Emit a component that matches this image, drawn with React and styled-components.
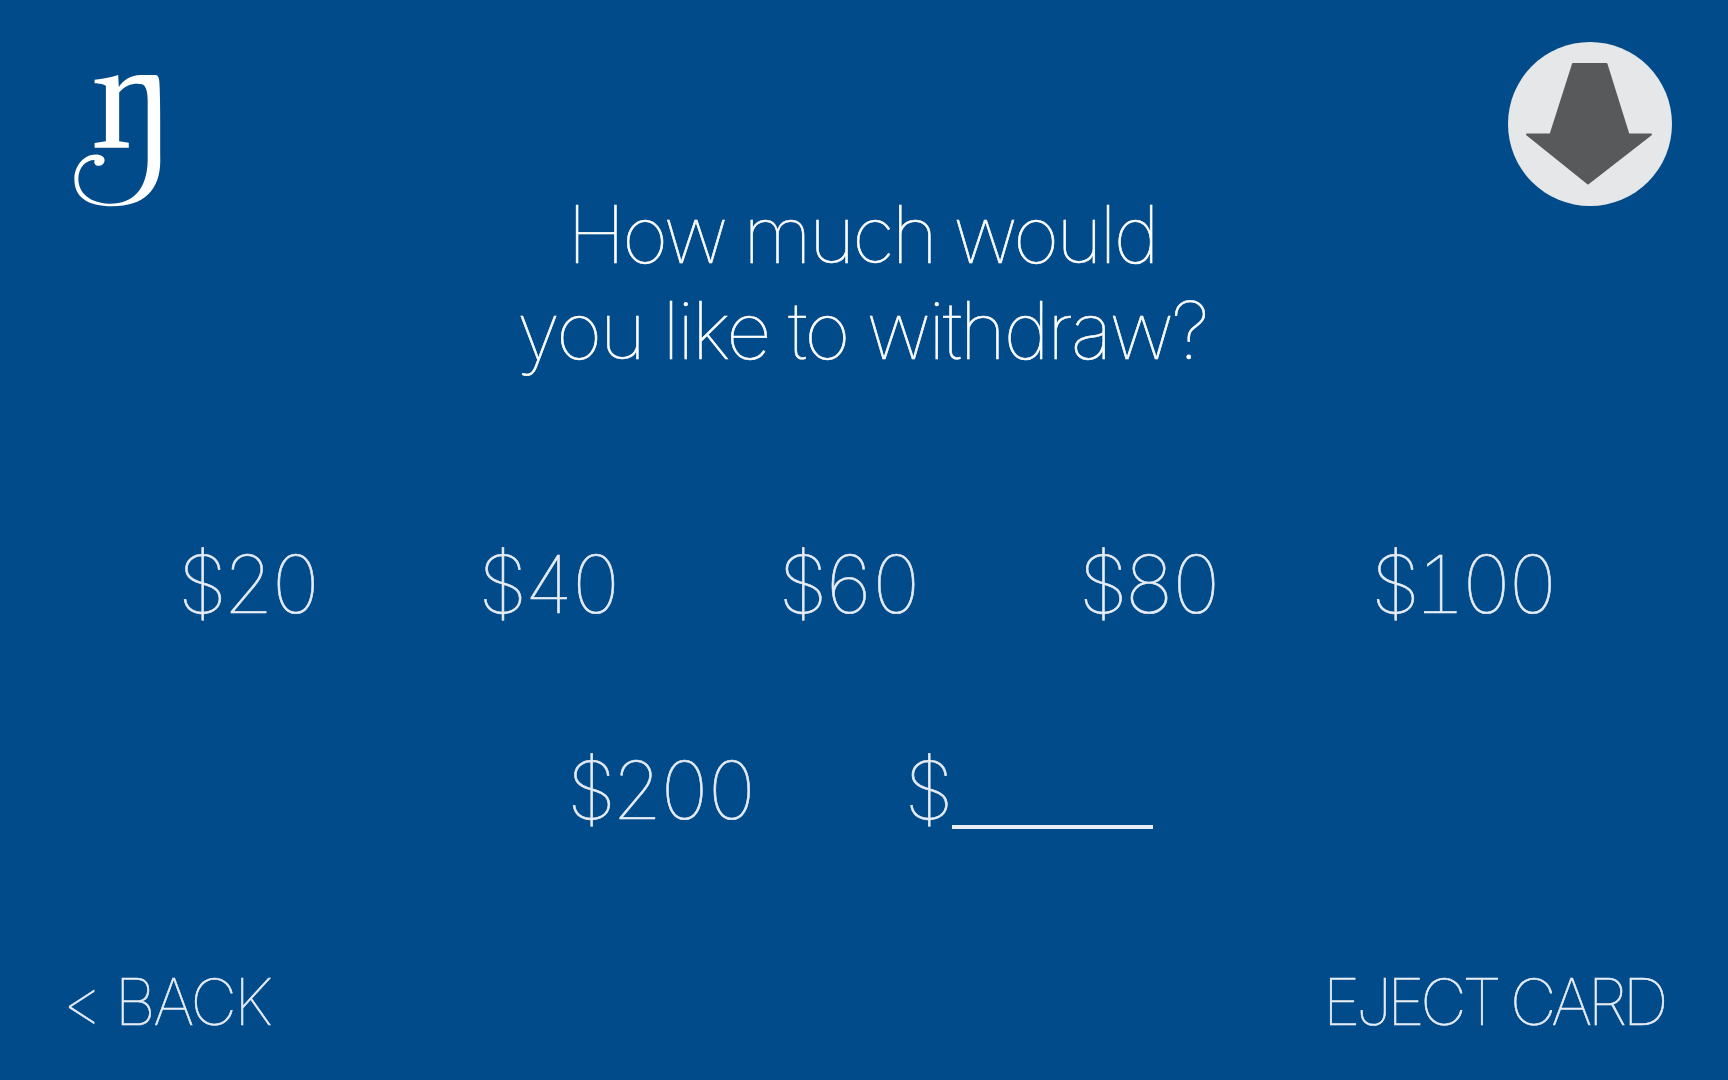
import React from 'react'
import styled, { createGlobalStyle } from 'styled-components'

const GlobalStyle = createGlobalStyle`
  html, body {
    margin: 0;
    padding: 0;
    background: #014b8b;
  }
`

const Screen = styled.div`
  box-sizing: border-box;
  width: 1728px;
  height: 1080px;
  overflow: hidden;
  padding: 42px 56px 0;
  background: #014b8b;
  color: #fff;
  font-family: Inter, "Liberation Sans", sans-serif;
  font-weight: 100;
  font-variant-numeric: tabular-nums;
  -webkit-text-stroke: 0.6px currentColor;
`

const TopRow = styled.header`
  display: grid;
  grid-template-columns: 1fr auto 1fr;
  align-items: start;
`

const Logo = styled.svg`
  display: block;
  width: 87px;
  height: 132px;
  margin: 33px 0 0 18px;
`

const Title = styled.h1`
  margin: 144px 0 0 -4px;
  font-size: 79px;
  line-height: 96px;
  font-weight: 100;
  text-align: center;
  white-space: nowrap;
`

const TitleLine = styled.span`
  display: block;
  letter-spacing: ${p => p.$spacing}px;
`

const ArrowBadge = styled.svg`
  display: block;
  width: 164px;
  height: 164px;
  justify-self: end;
`

const AmountRow = styled.div`
  display: flex;
  justify-content: ${p => p.$center ? 'center' : 'flex-start'};
  gap: ${p => p.$gap}px;
  margin-top: ${p => p.$top}px;
  padding: 0 ${p => p.$right || 0}px 0 ${p => p.$left || 0}px;
`

const Amount = styled.button`
  padding: 0;
  border: 0;
  background: none;
  color: #e8edf5;
  font: inherit;
  font-size: 80px;
  line-height: 90px;
  letter-spacing: -4.3px;

  &:nth-child(5) {
    margin-left: -8px;
    letter-spacing: -5.3px;
  }
`

const Blank = styled.span`
  display: inline-block;
  width: 201px;
  height: 4px;
  margin-left: 3px;
  background: #e8edf5;
  vertical-align: -10px;
`

const Footer = styled.footer`
  display: flex;
  justify-content: space-between;
  margin-top: 129px;
  padding: 0 8px 0 5px;
`

const NavLink = styled.button`
  padding: 0;
  border: 0;
  background: none;
  color: #e8edf5;
  font: inherit;
  font-size: 64px;
  line-height: 76px;
  letter-spacing: ${p => p.$tight ? -4.4 : -2.4}px;
`

const amounts = ['$20', '$40', '$60', '$80', '$100']

export default function App() {
  return (
    <Screen>
      <GlobalStyle />
      <TopRow>
        <Logo viewBox="100 72 262 398" aria-label="logo">
          <path
            fill="#fff"
            d="M162 86 C185 84 210 80 233 72 L235 108 C250 85 272 73 300 72 L345 72 C352 72 356 78 357 90 C360 130 360 200 360 330 C360 420 310 468 215 468 C140 468 100 440 101 385 C102 345 130 312 165 312 C182 312 193 320 192 330 C191 340 183 346 174 346 C165 346 158 338 162 328 C135 328 113 352 113 385 C113 430 150 458 205 460 C275 462 320 420 322 330 L322 150 C322 125 318 105 305 100 C285 95 255 100 236 125 L236 272 L265 276 L265 291 L162 291 L162 277 L196 272 L196 105 C190 100 175 97 162 97 Z"
          />
        </Logo>
        <Title>
          <TitleLine $spacing={-2.8}>How much would</TitleLine>
          <TitleLine $spacing={-2.3}>you like to withdraw?</TitleLine>
        </Title>
        <ArrowBadge viewBox="0 0 164 164">
          <circle cx="82" cy="82" r="82" fill="#e6e7e8" />
          <path
            fill="#58595b"
            stroke="#58595b"
            strokeWidth="2"
            strokeLinejoin="round"
            d="M65 22 L98.5 22 L120.5 92.5 L143 92.5 L80 141.5 L19 92.5 L42.5 92.5 Z"
          />
        </ArrowBadge>
      </TopRow>
      <AmountRow $gap={161} $top={161} $left={122}>
        {amounts.map(a => <Amount key={a}>{a}</Amount>)}
      </AmountRow>
      <AmountRow $center $gap={151} $top={116} $right={8}>
        <Amount>$200</Amount>
        <Amount>$<Blank /></Amount>
      </AmountRow>
      <Footer>
        <NavLink>&lt; BACK</NavLink>
        <NavLink $tight>EJECT CARD</NavLink>
      </Footer>
    </Screen>
  )
}
